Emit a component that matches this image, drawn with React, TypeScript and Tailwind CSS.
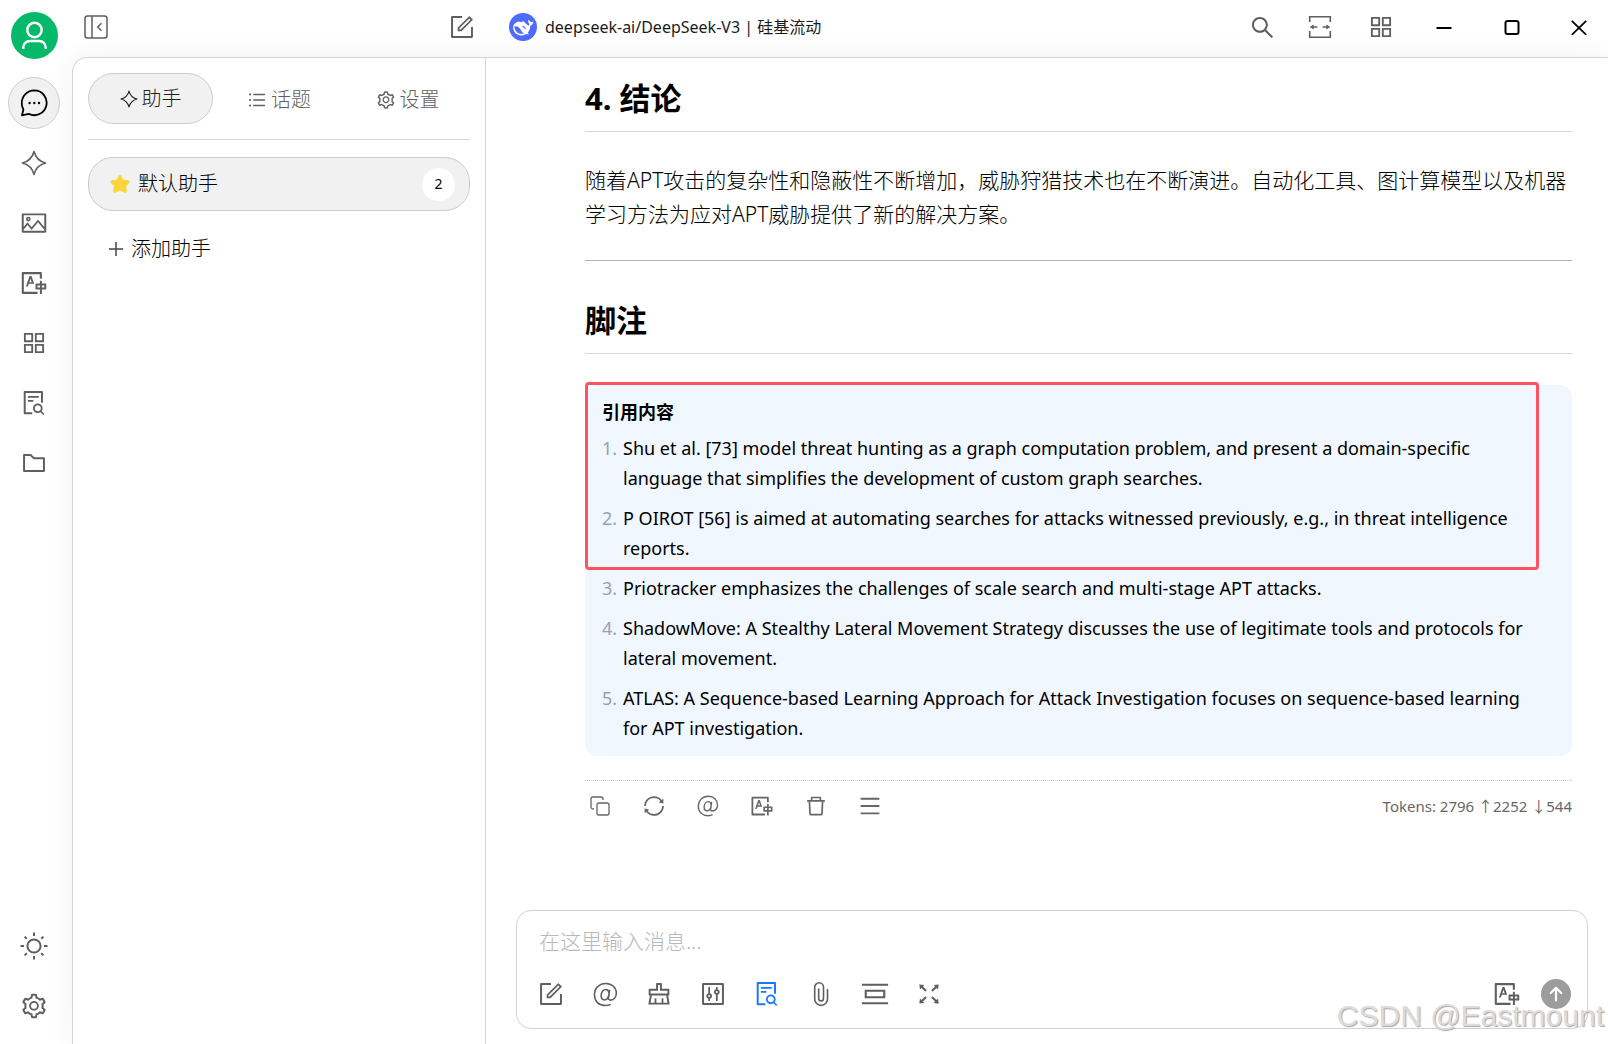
import type { ReactNode } from 'react'
import {
  AiOutlineAppstore,
  AiOutlineClear,
  AiOutlineControl,
  AiOutlineDelete,
  AiOutlineFileSearch,
  AiOutlineFolder,
  AiOutlineForm,
  AiOutlineFullscreen,
  AiOutlineMenu,
  AiOutlinePicCenter,
  AiOutlinePicture,
  AiOutlinePlus,
  AiOutlineSearch,
  AiOutlineSetting,
  AiOutlineSync,
  AiOutlineTranslation,
  AiOutlineUnorderedList,
} from 'react-icons/ai'

interface IconButtonProps {
  label: string
  className?: string
  children: ReactNode
}

function IconButton({ label, className = 'size-[54px]', children }: IconButtonProps) {
  return (
    <button type="button" aria-label={label} className={`flex shrink-0 items-center justify-center ${className}`}>
      {children}
    </button>
  )
}

function UserIcon() {
  return (
    <svg viewBox="0 0 47 47" className="size-[47px]" fill="none" stroke="#fff" strokeWidth="2.4">
      <circle cx="23.5" cy="18" r="7.2" />
      <path d="M12.3 37v-1.5a6.5 6.5 0 0 1 6.5-6.5h9.4a6.5 6.5 0 0 1 6.5 6.5V37" />
    </svg>
  )
}

function ChatIcon() {
  return (
    <svg viewBox="0 0 28 28" className="size-7" fill="none" stroke="#000" strokeWidth="1.8">
      <path d="M14.3 1.4a12.4 12.4 0 1 1-5.6 23.5L2 26.3l1.4-5.8a12.2 12.2 0 0 1-1.6-6.5A12.5 12.5 0 0 1 14.3 1.4z" strokeLinejoin="round" />
      <g fill="#000" stroke="none">
        <circle cx="9.6" cy="14" r="1.2" />
        <circle cx="14.3" cy="14" r="1.2" />
        <circle cx="19" cy="14" r="1.2" />
      </g>
    </svg>
  )
}

function SparkIcon({ className }: { className: string }) {
  return (
    <svg viewBox="0 0 26 26" className={className} fill="none" stroke="currentColor" strokeWidth="1.6" strokeLinejoin="round">
      <path d="M13 1.5c1.6 6.2 5 9.8 11.500 11.500-6.500 1.700-9.900 5.300-11.500 11.500-1.600-6.200-5-9.800-11.500-11.500C8 11.300 11.400 7.700 13 1.500z" />
    </svg>
  )
}

function SunIcon() {
  return (
    <svg viewBox="0 0 28 28" className="size-7" fill="none" stroke="currentColor" strokeWidth="2">
      <circle cx="14" cy="14" r="6.6" />
      <path d="M14 .5V4M14 24v3.5M.5 14H4M24 14h3.5M4.600 4.600l2.200 2.200M21.200 21.200l2.200 2.200M4.600 23.400l2.200-2.200M21.200 6.800l2.200-2.200" />
    </svg>
  )
}

function PanelIcon() {
  return (
    <svg viewBox="0 0 24 24" className="size-6" fill="none" stroke="currentColor" strokeWidth="1.5">
      <rect x="1" y="1" width="22" height="22" rx="2.5" />
      <path d="M8 1v22M17.500 8.200 13.700 12l3.800 3.800" />
    </svg>
  )
}

function WidthIcon() {
  return (
    <svg viewBox="0 0 24 24" className="size-6" fill="none" stroke="currentColor" strokeWidth="1.6">
      <path d="M1.700 7V1.800h20.600V7M1.700 16v6.200h20.600V16M4 12h5.500M14.500 12H20" />
      <path d="M1.700 12l4-2.600v5.200zM22.300 12l-4-2.600v5.200z" fill="currentColor" stroke="none" />
    </svg>
  )
}

function CopyIcon() {
  return (
    <svg viewBox="0 0 20 20" className="size-5" fill="none" stroke="currentColor" strokeWidth="1.3">
      <rect x="7" y="7" width="12" height="12" rx="2" />
      <path d="M4 13H3a2 2 0 0 1-2-2V3a2 2 0 0 1 2-2h8a2 2 0 0 1 2 2v1" />
    </svg>
  )
}

function AtIcon({ className }: { className: string }) {
  return (
    <svg viewBox="0 0 24 24" className={className} fill="none" stroke="currentColor" strokeWidth="1.5">
      <path d="M16 7.500l-1.100 6.700c-.4 2.300.4 3.200 2 3.200 2.900 0 5.500-2.600 5.500-6.600C22.400 5.500 18.200 1.400 12.300 1.400 6 1.400 1.400 6 1.400 12.300c0 6.200 4.300 10.300 10.600 10.300 1.900 0 3.600-.4 5-1.100" />
      <path d="M15.300 10.500c-.2-2-1.300-3.300-3-3.300-2.500 0-4.500 2.500-4.500 5.800 0 2.500 1.200 4.200 3.200 4.200 2 0 3.700-1.700 4.200-4.500" />
    </svg>
  )
}

function ClipIcon() {
  return (
    <svg viewBox="0 0 16 26" className="h-[26px] w-4" fill="none" stroke="currentColor" strokeWidth="1.6" strokeLinecap="round">
      <path d="M14.500 8.500v9.500a6.400 6.400 0 0 1-12.800 0V6.200a4.400 4.400 0 0 1 8.800 0V17.500a2.400 2.400 0 0 1-4.800 0V8" />
    </svg>
  )
}

function StarIcon() {
  return (
    <svg viewBox="0 0 20 20" className="size-5" fill="#fdd43c">
      <path d="M8.700 1.800c.6-1.200 2-1.200 2.600 0l1.800 3.800 4.800.6c1.700.2 2.300 1.700 1.200 2.800l-3 3 .8 4.600c.2 1.700-1 2.600-2.500 1.900L10 16.400l-4.400 2.100c-1.500.7-2.700-.2-2.500-1.900l.8-4.600-3-3C-.2 7.900.4 6.400 2.100 6.200l4.800-.6z" />
    </svg>
  )
}

function WhaleLogo() {
  return (
    <svg viewBox="0 0 28 28" className="size-7 shrink-0">
      <circle cx="14" cy="14" r="14" fill="#4d6bfe" />
      <path
        fill="#fff"
        d="M24.300 8.200c-.9.8-1.800 1-2.700.9-.6-1.300-1.600-1.900-2.600-1.900.1 1.600.5 2.900 1.600 3.800-.3 1-.9 1.600-1.500 1.500-2.300-1.500-3.200-3.700-5.500-4.400-.4.3-.3.7.1 1.200-4.300-1.500-9.500.3-9.500 5.200 0 4.600 3.500 7.900 8 7.900 2 0 3.500-.6 4.700-1.500 1 .5 2.300.5 3 .1-.6-.4-1-.8-1.200-1.400 1.700-1.800 2.500-4 2.700-6.900 1.600-.5 2.800-2 2.900-4.500z"
      />
      <path fill="#4d6bfe" d="M5.400 13.400c3.700-.3 5.400 1.600 6.600 3.900.8 1.500 1.700 2.500 3 3.200-4.600 1.400-9.300-1.600-9.600-7.100zM13 13.300c1.900-.8 3.800.8 3.800 3.100-1.500-.4-1.600-1.900-3.800-3.100z" />
    </svg>
  )
}

const navItems = [
  { label: '智能体', icon: <SparkIcon className="size-[26px]" /> },
  { label: '绘画', icon: <AiOutlinePicture size={28} /> },
  { label: '翻译', icon: <AiOutlineTranslation size={28} /> },
  { label: '小程序', icon: <AiOutlineAppstore size={28} /> },
  { label: '知识库', icon: <AiOutlineFileSearch size={28} /> },
  { label: '文件', icon: <AiOutlineFolder size={28} /> },
]

const messageActions = [
  { label: '复制', icon: <CopyIcon /> },
  { label: '重新生成', icon: <AiOutlineSync size={24} /> },
  { label: '提及模型', icon: <AtIcon className="size-[22px]" /> },
  { label: '翻译', icon: <AiOutlineTranslation size={24} /> },
  { label: '删除', icon: <AiOutlineDelete size={24} /> },
  { label: '更多', icon: <AiOutlineMenu size={24} /> },
]

const inputActions = [
  { label: '新话题', icon: <AiOutlineForm size={28} /> },
  { label: '提及', icon: <AtIcon className="size-[25px]" /> },
  { label: '清空', icon: <AiOutlineClear size={28} /> },
  { label: '参数', icon: <AiOutlineControl size={28} /> },
  { label: '知识库', icon: <AiOutlineFileSearch size={28} className="text-[#1677ff]" /> },
  { label: '附件', icon: <ClipIcon /> },
  { label: '清除上下文', icon: <AiOutlinePicCenter size={30} /> },
  { label: '展开', icon: <AiOutlineFullscreen size={28} /> },
]

const citations = [
  ['Shu et al. [73] model threat hunting as a graph computation problem, and present a domain-specific', 'language that simplifies the development of custom graph searches.'],
  ['P OIROT [56] is aimed at automating searches for attacks witnessed previously, e.g., in threat intelligence', 'reports.'],
  ['Priotracker emphasizes the challenges of scale search and multi-stage APT attacks.'],
  ['ShadowMove: A Stealthy Lateral Movement Strategy discusses the use of legitimate tools and protocols for', 'lateral movement.'],
  ['ATLAS: A Sequence-based Learning Approach for Attack Investigation focuses on sequence-based learning', 'for APT investigation.'],
]

function Sidebar() {
  return (
    <nav className="flex w-[72px] shrink-0 flex-col items-center pt-3 pr-1 pb-3 text-[#5f5f5f]">
      <button type="button" aria-label="用户" className="rounded-full bg-[#05b96b]">
        <UserIcon />
      </button>
      <div className="mt-[18px] flex flex-col items-center gap-2">
        <IconButton label="聊天" className="size-[52px] rounded-full border border-[#cfcfcf] bg-[#f1f1f1]">
          <ChatIcon />
        </IconButton>
        {navItems.map((item) => (
          <IconButton key={item.label} label={item.label} className="size-[52px]">
            {item.icon}
          </IconButton>
        ))}
      </div>
      <div className="mt-auto flex flex-col items-center gap-2">
        <IconButton label="主题" className="size-[52px]">
          <SunIcon />
        </IconButton>
        <IconButton label="设置" className="size-[52px]">
          <AiOutlineSetting size={28} />
        </IconButton>
      </div>
    </nav>
  )
}

function TitleBar() {
  return (
    <header className="flex h-[57px] shrink-0 items-center pb-[3px] text-[#5f5f5f]">
      <div className="flex w-[413px] shrink-0 items-center justify-between pr-[9px] pl-3">
        <button type="button" aria-label="收起侧栏">
          <PanelIcon />
        </button>
        <button type="button" aria-label="新建话题">
          <AiOutlineForm size={28} />
        </button>
      </div>
      <button type="button" className="ml-6 flex items-center gap-2 text-base text-[#1a1a1a]">
        <WhaleLogo />
        <span>deepseek-ai/DeepSeek-V3 | 硅基流动</span>
      </button>
      <div className="ml-auto flex items-center">
        <IconButton label="搜索" className="w-[60px]">
          <AiOutlineSearch size={27} />
        </IconButton>
        <IconButton label="宽度" className="w-[56px]">
          <WidthIcon />
        </IconButton>
        <IconButton label="小程序" className="w-[66px]">
          <AiOutlineAppstore size={28} />
        </IconButton>
        <IconButton label="最小化" className="w-[60px] text-black">
          <svg viewBox="0 0 16 16" className="size-4" stroke="currentColor" strokeWidth="2">
            <path d="M.5 9h15" />
          </svg>
        </IconButton>
        <IconButton label="最大化" className="w-[76px] text-black">
          <svg viewBox="0 0 16 16" className="size-4" fill="none" stroke="currentColor" strokeWidth="2">
            <rect x="1.500" y="2" width="13" height="13" rx="2" />
          </svg>
        </IconButton>
        <IconButton label="关闭" className="w-[58px] text-black">
          <svg viewBox="0 0 16 16" className="size-4" stroke="currentColor" strokeWidth="1.8">
            <path d="M.8 1.800l14.400 14M15.200 1.800.8 15.800" />
          </svg>
        </IconButton>
      </div>
    </header>
  )
}

function AssistantPanel() {
  return (
    <aside className="w-[413px] shrink-0 border-r border-[#d4d4d4] px-[15px] pt-[15px]">
      <div role="tablist" className="flex justify-between border-b border-[#d6d6d6] pb-[15px] text-[20px] font-light text-[#5f5f5f]">
        <button type="button" role="tab" aria-selected="true" className="flex h-[51px] w-[125px] items-center justify-center gap-1 rounded-full border border-[#cdcdcd] bg-[#f1f1f1] text-[#1f1f1f]">
          <SparkIcon className="size-[18px]" />
          助手
        </button>
        <button type="button" role="tab" aria-selected="false" className="flex h-[51px] w-[125px] items-center justify-center gap-1 pt-[2px]">
          <AiOutlineUnorderedList size={20} />
          话题
        </button>
        <button type="button" role="tab" aria-selected="false" className="flex h-[51px] w-[125px] items-center justify-center gap-1 pt-[2px]">
          <AiOutlineSetting size={20} />
          设置
        </button>
      </div>
      <button type="button" className="mt-[17px] flex h-[54px] w-full items-center gap-2 rounded-[25px] border border-[#cbcbcb] bg-[#f1f1f1] pr-[14px] pl-[21px] text-[20px] font-light">
        <StarIcon />
        默认助手
        <span className="ml-auto flex size-[33px] items-center justify-center rounded-full bg-white text-sm font-normal">2</span>
      </button>
      <button type="button" className="mt-[21px] flex items-center gap-[5px] pl-[18px] text-[20px] leading-[34px] font-light">
        <AiOutlinePlus size={20} className="text-[#444]" />
        添加助手
      </button>
    </aside>
  )
}

function Message() {
  return (
    <article className="min-h-0 flex-1 overflow-hidden pt-4 pr-9 pl-[99px]">
      <h2 className="border-b border-[#d6d6d6] pb-[9px] text-[31px] leading-[48px] font-bold">4. 结论</h2>
      <p className="mt-[31px] text-[21px] leading-[34px] font-light whitespace-nowrap">
        随着APT攻击的复杂性和隐蔽性不断增加，威胁狩猎技术也在不断演进。自动化工具、图计算模型以及机器
        <br />
        学习方法为应对APT威胁提供了新的解决方案。
      </p>
      <hr className="mt-[29px] border-[#b0b0b0]" />
      <h2 className="mt-[35px] border-b border-[#d6d6d6] pb-[9px] text-[31px] leading-[48px] font-bold">脚注</h2>
      <section className="relative mt-[31px] rounded-xl bg-[#f0f7ff] py-3 pr-3 pl-[17px]">
        <h3 className="text-[18px] leading-[30px] font-bold">引用内容</h3>
        <ol className="mt-[6px] mb-px flex flex-col gap-[10px] text-[18px] leading-[30px] whitespace-nowrap">
          {citations.map((lines, i) => (
            <li key={i} className="flex">
              <span className="w-[21px] shrink-0 text-[#9aa0aa]">{i + 1}.</span>
              <div>
                {lines.map((line) => (
                  <p key={line}>{line}</p>
                ))}
              </div>
            </li>
          ))}
        </ol>
        {/* highlight around the first two citations */}
        <div className="pointer-events-none absolute -top-[3px] right-[33px] left-0 h-[188px] rounded border-[3px] border-[#ff5364]" />
      </section>
      <footer className="mt-6 flex h-[51px] items-center justify-between border-t border-dotted border-[#c8c8c8] text-[#666]">
        <div className="-ml-3 flex">
          {messageActions.map((action) => (
            <IconButton key={action.label} label={action.label} className="h-10 w-[54px]">
              {action.icon}
            </IconButton>
          ))}
        </div>
        <span className="text-[15px]">Tokens: 2796 ↑2252 ↓544</span>
      </footer>
    </article>
  )
}

function Composer() {
  return (
    <form className="mr-5 mb-[15px] ml-[30px] shrink-0 rounded-[15px] border border-[#d2d2d2] pt-[15px] pb-[14px]">
      <textarea
        aria-label="消息"
        rows={1}
        placeholder="在这里输入消息..."
        className="block w-full resize-none bg-transparent px-[22px] text-[21px] leading-[30px] font-light outline-none placeholder:text-[#b8b8b8]"
      />
      <div className="mt-[18px] flex h-10 items-center pr-4 pl-[7px] text-[#5f5f5f]">
        {inputActions.map((action) => (
          <IconButton key={action.label} label={action.label}>
            {action.icon}
          </IconButton>
        ))}
        <IconButton label="翻译" className="mr-5 ml-auto size-7">
          <AiOutlineTranslation size={28} />
        </IconButton>
        <button type="button" aria-label="发送" className="flex size-[30px] items-center justify-center rounded-full bg-[#9c9c9c]">
          <svg viewBox="0 0 16 16" className="size-4" fill="none" stroke="#fff" strokeWidth="2.2" strokeLinecap="round" strokeLinejoin="round">
            <path d="M8 14.500V2M2.800 7 8 1.800 13.200 7" />
          </svg>
        </button>
      </div>
    </form>
  )
}

export default function App() {
  return (
    <div className="relative flex h-screen overflow-hidden bg-white font-['Noto_Sans','Noto_Sans_CJK_SC',sans-serif] text-black">
      <Sidebar />
      <div className="flex min-w-0 flex-1 flex-col">
        <TitleBar />
        <div className="flex min-h-0 flex-1 rounded-tl-[15px] border-t border-l border-[#d4d4d4] bg-white shadow-[0_0_28px_rgba(0,0,0,0.06)]">
          <AssistantPanel />
          <main className="flex min-w-0 flex-1 flex-col">
            <Message />
            <Composer />
          </main>
        </div>
      </div>
      <span className="pointer-events-none absolute right-1 bottom-2 font-['Liberation_Sans',sans-serif] text-[30px] leading-10 text-[#dcdcdc] [text-shadow:1px_1px_1px_#a8a8a8]">
        CSDN @Eastmount
      </span>
    </div>
  )
}
